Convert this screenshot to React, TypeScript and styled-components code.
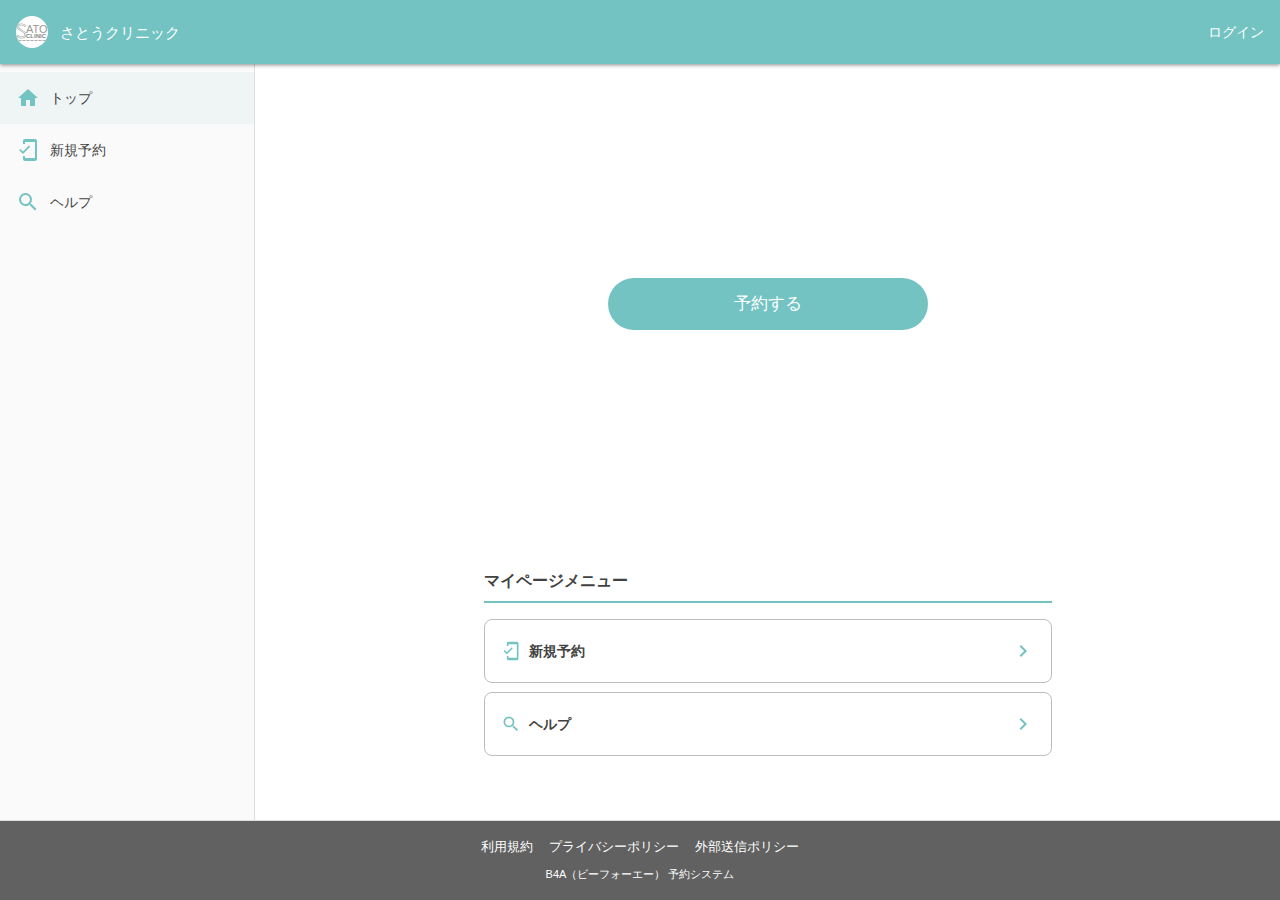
import React from "react";
import styled, { createGlobalStyle } from "styled-components";
import { MdChevronRight, MdHome, MdMobileFriendly, MdSearch } from "react-icons/md";

const teal = "#73c3c3";
const ink = "#424242";

const GlobalStyle = createGlobalStyle`
  *, *::before, *::after { box-sizing: border-box; }
  body {
    margin: 0;
    background: #fff;
    color: ${ink};
    font-family: "Liberation Sans", Arial, sans-serif;
    font-size: 14px;
    line-height: 20px;
  }
  a { color: inherit; text-decoration: none; }
`;

const Page = styled.div`
  display: flex;
  flex-direction: column;
  min-height: 100vh;
`;

const Header = styled.header`
  position: relative;
  z-index: 1;
  display: flex;
  align-items: center;
  justify-content: space-between;
  height: 64px;
  padding: 0 16px;
  background: ${teal};
  color: #fff;
  box-shadow: 0 1px 4px rgba(0, 0, 0, 0.45);
`;

const Brand = styled.a`
  display: flex;
  align-items: center;
  gap: 12px;
  font-size: 15px;
  line-height: 21px;
`;

const LoginLink = styled.a`
  font-size: 14px;
`;

const Body = styled.div`
  display: flex;
  flex: 1;
`;

const Sidebar = styled.nav`
  flex: 0 0 255px;
  padding-top: 8px;
  background: #fafafa;
  border-right: 1px solid #dedede;
`;

const NavItem = styled.a<{ $active?: boolean }>`
  display: flex;
  align-items: center;
  gap: 10px;
  height: 52px;
  padding: 0 16px;
  background: ${(p) => (p.$active ? "#eff5f5" : "transparent")};

  svg { color: ${teal}; }
`;

const Main = styled.main`
  flex: 1;
  padding: 0 24px 64px;
`;

const Hero = styled.section`
  display: flex;
  align-items: center;
  justify-content: center;
  height: 480px;
`;

const ReserveButton = styled.button`
  width: 320px;
  height: 52px;
  padding: 0 0 2px;
  border: 0;
  border-radius: 26px;
  background: ${teal};
  color: #fff;
  font-family: inherit;
  font-size: 17px;
  cursor: pointer;
`;

const Menu = styled.section`
  max-width: 568px;
  margin: 24px auto 0;
`;

const MenuTitle = styled.h2`
  margin: 0 0 16px;
  padding-bottom: 8px;
  border-bottom: 2px solid ${teal};
  font-size: 16px;
  line-height: 25px;
`;

const Cards = styled.div`
  display: flex;
  flex-direction: column;
  gap: 9px;
`;

const Card = styled.a`
  display: flex;
  align-items: center;
  gap: 8px;
  height: 64px;
  padding: 0 16px;
  border: 1px solid #bdbdbd;
  border-radius: 8px;
  font-weight: bold;

  svg { color: ${teal}; }
`;

const CardLabel = styled.span`
  flex: 1;
`;

const Footer = styled.footer`
  display: flex;
  flex-direction: column;
  align-items: center;
  gap: 8px;
  min-height: 80px;
  padding: 16px 16px 8px;
  border-top: 1px solid #dedede;
  background: #616161;
  color: #fff;
`;

const FooterLinks = styled.div`
  display: flex;
  gap: 16px;
  font-size: 13px;
`;

const Credit = styled.small`
  font-size: 11px;
  line-height: 18px;
`;

const Logo = () => (
  <svg width="32" height="32" viewBox="0 0 32 32" aria-hidden="true">
    <circle cx="16" cy="16" r="16" fill="#fff" />
    <path
      d="M9.5 10.5C8 7.5 1.5 8 2 11.5c.4 3 7.500 3.500 7.500 7 0 3.800-6.500 4-8.300.8"
      fill="none"
      stroke="#b0b0b0"
      strokeWidth="2"
    />
    <path
      d="M9.500 10.500C8 7.500 1.500 8 2 11.500c.4 3 7.500 3.500 7.500 7 0 3.800-6.500 4-8.300.8"
      fill="none"
      stroke="#fff"
      strokeWidth="0.8"
    />
    <g fontFamily="Liberation Sans, sans-serif">
      <text x="10" y="17" fontSize="11" fill="#999">ATO</text>
      <text x="10" y="22" fontSize="6" fill="#888" fontWeight="bold">CLINIC</text>
    </g>
    <path d="M3 24.5h27" stroke="#aaa" strokeDasharray="2 0.5 1 0.5" />
  </svg>
);

const footerLinks = ["利用規約", "プライバシーポリシー", "外部送信ポリシー"];

export default function App() {
  return (
    <>
      <GlobalStyle />
      <Page lang="ja">
        <Header>
          <Brand href="#">
            <Logo />
            さとうクリニック
          </Brand>
          <LoginLink href="#login">ログイン</LoginLink>
        </Header>
        <Body>
          <Sidebar>
            <NavItem href="#" $active aria-current="page">
              <MdHome size={24} />
              トップ
            </NavItem>
            <NavItem href="#reserve">
              <MdMobileFriendly size={24} />
              新規予約
            </NavItem>
            <NavItem href="#help">
              <MdSearch size={24} />
              ヘルプ
            </NavItem>
          </Sidebar>
          <Main>
            <Hero>
              <ReserveButton type="button">予約する</ReserveButton>
            </Hero>
            <Menu>
              <MenuTitle>マイページメニュー</MenuTitle>
              <Cards>
                <Card href="#reserve">
                  <MdMobileFriendly size={20} />
                  <CardLabel>新規予約</CardLabel>
                  <MdChevronRight size={24} />
                </Card>
                <Card href="#help">
                  <MdSearch size={20} />
                  <CardLabel>ヘルプ</CardLabel>
                  <MdChevronRight size={24} />
                </Card>
              </Cards>
            </Menu>
          </Main>
        </Body>
        <Footer>
          <FooterLinks>
            {footerLinks.map((label) => (
              <a key={label} href="#policy">{label}</a>
            ))}
          </FooterLinks>
          <Credit>B4A（ビーフォーエー） 予約システム</Credit>
        </Footer>
      </Page>
    </>
  );
}
